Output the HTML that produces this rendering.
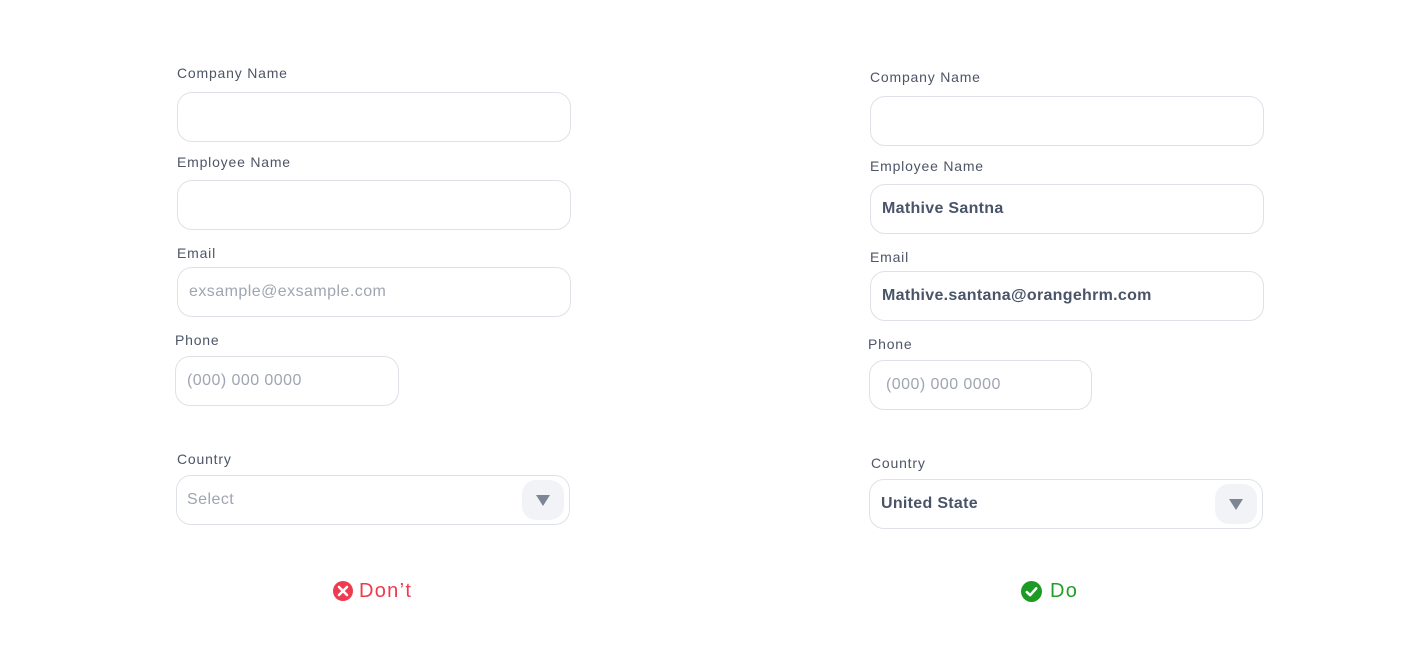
<!DOCTYPE html>
<html><head><style>
body{margin:0;width:1424px;height:648px;background:#fff;position:relative;font-family:"Liberation Sans",sans-serif;overflow:hidden}
.l{position:absolute;font-size:14px;color:#4d5567;line-height:16px;letter-spacing:.8px}
.b{position:absolute;box-sizing:border-box;border:1px solid #dfe1e8;border-radius:15px;height:50px;display:flex;align-items:center;padding-left:11px;font-size:16px;letter-spacing:.45px}
.ph{color:#a0a5b1}
.v{color:#4a5468;font-weight:bold;font-size:16px;letter-spacing:.3px}
.dd{position:absolute;right:5px;top:4px;width:42px;height:40px;border-radius:14px;background:#f2f3f6}
.dd:after{content:"";position:absolute;left:14px;top:15px;border-left:7px solid transparent;border-right:7px solid transparent;border-top:11px solid #7e8594}
.t{position:absolute;font-size:20px;letter-spacing:1.3px;top:580px}
</style></head><body>
<div class="l" style="left:177px;top:65px">Company Name</div>
<div class="b" style="left:177px;top:92px;width:394px"></div>
<div class="l" style="left:177px;top:154px">Employee Name</div>
<div class="b" style="left:177px;top:180px;width:394px"></div>
<div class="l" style="left:177px;top:245px">Email</div>
<div class="b ph" style="left:177px;top:267px;width:394px">exsample@exsample.com</div>
<div class="l" style="left:175px;top:332px">Phone</div>
<div class="b ph" style="left:175px;top:356px;width:224px">(000) 000 0000</div>
<div class="l" style="left:177px;top:451px">Country</div>
<div class="b ph" style="left:176px;top:475px;width:394px;padding-left:10px">Select<div class="dd"></div></div>

<div class="l" style="left:870px;top:69px">Company Name</div>
<div class="b" style="left:870px;top:96px;width:394px"></div>
<div class="l" style="left:870px;top:158px">Employee Name</div>
<div class="b v" style="left:870px;top:184px;width:394px">Mathive Santna</div>
<div class="l" style="left:870px;top:249px">Email</div>
<div class="b v" style="left:870px;top:271px;width:394px">Mathive.santana@orangehrm.com</div>
<div class="l" style="left:868px;top:336px">Phone</div>
<div class="b ph" style="left:869px;top:360px;width:223px;padding-left:16px">(000) 000 0000</div>
<div class="l" style="left:871px;top:455px">Country</div>
<div class="b v" style="left:869px;top:479px;width:394px">United State<div class="dd"></div></div>

<svg style="position:absolute;left:333px;top:581px" width="20" height="20" viewBox="0 0 20 20"><circle cx="10" cy="10" r="10" fill="#ef3a50"/><path d="M6 6L14 14M14 6L6 14" stroke="#fff" stroke-width="2.6" stroke-linecap="round"/></svg>
<div class="t" style="left:359px;color:#ec3a4e">Don’t</div>
<svg style="position:absolute;left:1021px;top:581px" width="21" height="21" viewBox="0 0 20 20"><circle cx="10" cy="10" r="10" fill="#1d9a24"/><path d="M5.5 10.5L8.7 13.5L14.5 7" stroke="#fff" stroke-width="2.4" fill="none" stroke-linecap="round" stroke-linejoin="round"/></svg>
<div class="t" style="left:1050px;color:#22a02a">Do</div>
</body></html>
